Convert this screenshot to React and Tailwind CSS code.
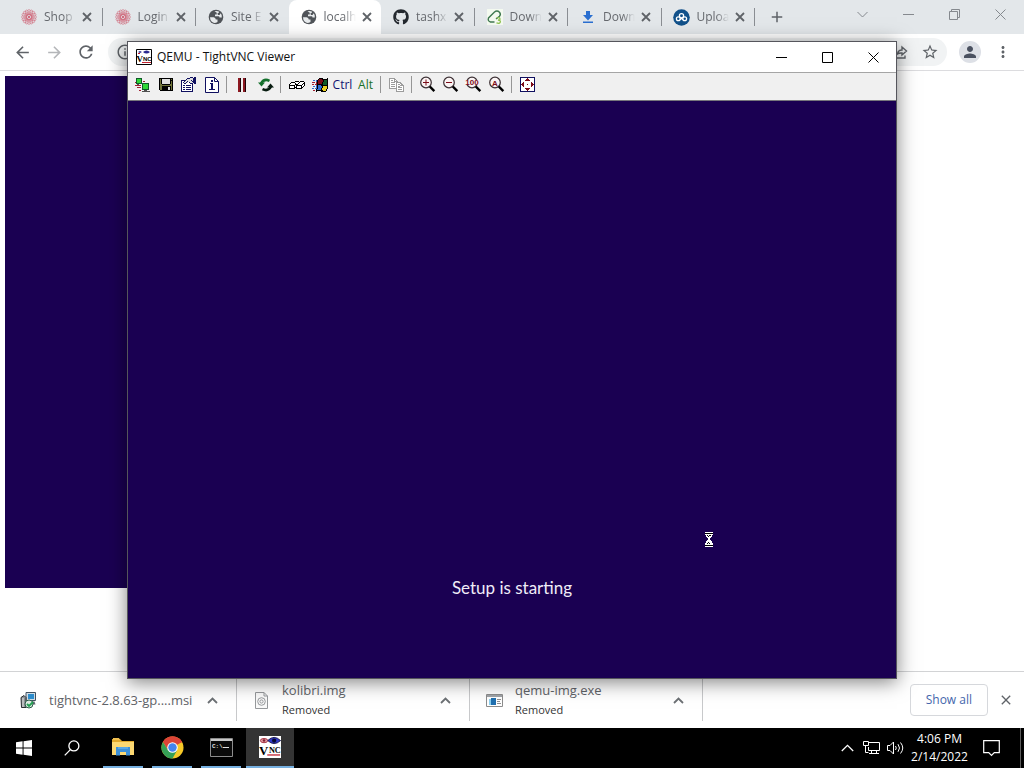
import React from "react";
import {
  MdAdd, MdArrowBack, MdArrowForward, MdClose, MdInfoOutline, MdMoreVert,
  MdPerson, MdRefresh, MdStarBorder,
} from "react-icons/md";
import { FaGithub } from "react-icons/fa";

const palette = {
  K: "#000000", W: "#ffffff", N: "#101060", O: "#70743a", R: "#7c0c18", S: "#9c9c9c",
  L: "#30d838", G: "#0f5a28", D: "#505050", B: "#2f6fd0", Y: "#e8d020", E: "#e0e0e0", C: "#a02030",
};

/* Draws a bitmap icon, one square for each letter of the palette. */
function Bitmap({ rows }) {
  const w = rows[0].length;
  return (
    <svg width={w} height={rows.length} viewBox={`0 0 ${w} ${rows.length}`} shapeRendering="crispEdges" aria-hidden="true">
      {rows.flatMap((row, y) =>
        [...row].map((c, x) =>
          palette[c] ? <rect key={`${x}-${y}`} x={x} y={y} width="1" height="1" fill={palette[c]} /> : null
        )
      )}
    </svg>
  );
}

const newConnection = [
  ".GGGGGG........", ".GLLLLG........", ".GLLLLG........", ".GLLLLG.CC.....",
  "CGLLLLG........", ".GGGGGGGGGGGGG.", "..DD...GLLLLLG.", "CCCCCC.GLLLLLG.",
  ".......GLLLLLG.", "..CCCC.GLLLLLG.", ".......GLLLLLG.", ".......GGGGGGG.",
  "....CC...DDD...", ".......DDDDDDDD",
];
const floppy = [
  "KKKKKKKKKKKKKK", "KOKEEEEEEEEKOK", "KOKEEEEEEEEKKK", "KOKEEEEEEEEKOK", "KOKEEEEEEEEKOK",
  "KOKEEEEEEEEKOK", "KOOKKKKKKKKOOK", "KOOOOOOOOOOOOK", "KOOKKKKKKKKKOK", "KOOKKKKKKEEKOK",
  "KOOKKKKKKEEKOK", "KOOKKKKKKEEKOK", ".KKKKKKKKKKKKK",
];
const options = [
  ".........NNN.NN", "......NNNEEENNN", ".....NEEEEEENNN", "NNNNNEEEEENENNN", "NWWNEENEEEENNNN",
  "NWNEENEWNEEENNN", "NWWNNWWWWNNN.NN", "NWWWWWWWWWWN...", "NWNNWNNNNNWN...", "NWWWWWWWWWWN...",
  "NWNNWNNNNNWN...", "NWWWWWWWWWWN...", "NWNNWNNNNNWN...", "NWWWWWWWWWWN...", "NNNNNNNNNNNN...",
];
const keys = [
  "......KKKK.KKKK.", "..KKKKWWWWKWWWWK", ".KWWWWKWWKWWWWKK", "KWWWWWKKKWWWWKWK", "KKKKKKWKKKKKKWWK",
  "KWWWWKWKWWWWKWK.", "KWWWWKKKWWWWKK..", "KKKKKK.KKKKKK...",
];
const winFlag = [
  ".......KKKK....K", "......KRRRKKKKKK", ".BB.BKRRRRRKGGGK", "....BKRRRRRKGGGK", "CCC.CKRRRRKGGGGK",
  "....CKRRRRKGGGGK", "CC.CCKKKKKKGGGGK", "....BKBBBKKKKKKK", ".BB.BKBBBBKYYYYK", "....BKBBBBKYYYYK",
  "BB.BBKBBBKYYYYYK", "....KBBBBKYYYYK.", ".CC.KKKKKKKYYYK.", "....K....KKKKK..",
];
const copy = [
  "SSSSSS..........", "SWWWWSS.........", "SWSSWSWS........", "SWWWWSSSS.......", "SWSSSSWSSSSS....",
  "SWWWWWWSWWWSS...", "SWSSSSWSWSSWSS..", "SWWWWWWSWWWSSSS.", "SWSSSSWSWSSWWWS.", "SWWWWWWSWSSSSWS.",
  "SSSSSSSSWWWWWWS.", ".......SWSSSSWS.", ".......SWWWWWWS.", ".......SSSSSSSS.",
];
const fullScreen = [
  "NNNNNNNNNNNNNNN", "NWWWWWWRWWWWWWN", "NWWWWWRRRWWWWWN", "NWWWWRRRRRWWWWN", "NWWWWWWWWWWWWWN",
  "NWWRWWWWWWWRWWN", "NWRRWWWWWWWRRWN", "NRRRWWWRWWWRRRN", "NWRRWWWWWWWRRWN", "NWWRWWWWWWWRWWN",
  "NWWWWWWWWWWWWWN", "NWWWWRRRRRWWWWN", "NWWWWWRRRWWWWWN", "NWWWWWWRWWWWWWN", "NNNNNNNNNNNNNNN",
];
const hourglass = [
  "WWWWWWWW", "KKKKKKKK", "WWWWWWWW", ".WKWKKW.", ".WWKWWW.", "..WWWW..", "...WW...", "...WW...",
  "..WWWW..", ".WWWWWW.", ".WWKWWW.", "WWKWKWWW", "WWWWWWWW", "KKKKKKKK", "WWWWWWWW",
];

function RefreshArrows() {
  return (
    <svg width="16" height="14" viewBox="0 0 16 14" aria-hidden="true">
      <path d="M3 5.500Q6 0 11.500 2.800" fill="none" stroke="#14702c" strokeWidth="2.600" />
      <path d="M0 4.500h7L3.500 8.500z" fill="#14702c" />
      <path d="M13 8.500Q10 14 4.500 11.200" fill="none" stroke="#081c10" strokeWidth="2.600" />
      <path d="M16 9.500H9l3.500-4z" fill="#081c10" />
    </svg>
  );
}

function InfoPage() {
  return (
    <svg width="14" height="16" viewBox="0 0 14 16" aria-hidden="true">
      <path d="M.5.5h9l4 4v11H.5z" fill="#fff" stroke="#101060" />
      <path d="M9.500.5v4h4" fill="none" stroke="#101060" />
      <path d="M6 3h2v2H6zM5 6h3v6h2v1H4v-1h2V7H5z" fill="#101060" />
    </svg>
  );
}

function Pause() {
  return (
    <svg width="9" height="14" viewBox="0 0 9 14" shapeRendering="crispEdges" aria-hidden="true">
      <path d="M0 0h3v14H0zM5 0h3v14H5z" fill="#8c1820" />
      <path d="M2 0h1v14H2zM7 0h1v14H7z" fill="#200408" />
    </svg>
  );
}

function Magnifier({ kind }) {
  return (
    <svg width="17" height="17" viewBox="0 0 17 17" aria-hidden="true">
      <circle cx="7" cy="6.500" r="5.300" fill="#fbf4f4" stroke="#3c3034" strokeWidth="1.200" />
      <path d="M10.800 10.500l4.500 4.700" stroke="#000" strokeWidth="2.400" />
      {kind === "in" && <path d="M4 6h6v1H4zM6.500 3.500h1v6h-1z" fill="#7c0c18" />}
      {kind === "out" && <path d="M4 6h6v1H4z" fill="#7c0c18" />}
      {kind === "full" && (
        <>
          <path d="M0 4h14v5H0z" fill="#fbf4f4" />
          <text x="7" y="9" textAnchor="middle" fontFamily="Liberation Sans" fontWeight="700" fontSize="8" fill="#7c0c18">100</text>
        </>
      )}
      {kind === "auto" && (
        <text x="7" y="9.500" textAnchor="middle" fontFamily="Liberation Sans" fontWeight="700" fontSize="8" fill="#7c0c18">A</text>
      )}
    </svg>
  );
}

function VncLogo({ size }) {
  return (
    <svg width={size} height={size} viewBox="0 0 24 24" aria-hidden="true">
      <path d="M0 0h24v24H0z" fill="#fff" />
      <ellipse cx="5.500" cy="5" rx="4" ry="2.300" fill="#e8a0a8" stroke="#a02838" strokeWidth="1" />
      <circle cx="5.500" cy="5" r="1.400" fill="#802030" />
      <path d="M9.500 5q7-7 14 0q-7 6.500-14 0z" fill="#3038c8" stroke="#101048" />
      <circle cx="16.500" cy="5" r="2.300" fill="#080830" />
      <text x="0" y="20.500" fontFamily="Liberation Serif" fontWeight="700" fontSize="14" fill="#000">V</text>
      <text x="10.800" y="18.500" fontFamily="Liberation Serif" fontWeight="700" fontSize="9" fill="#000">NC</text>
      <path d="M9 20h14v1.400H9z" fill="#c02030" />
    </svg>
  );
}

function VncSmall() {
  return (
    <svg width="16" height="16" viewBox="0 0 16 16" aria-hidden="true">
      <path d="M.5.5h15v15H.5z" fill="#fff" stroke="#000" />
      <path d="M2 3l2-1 2 1-2 1zM7 3q3.500-3 7 0q-3.500 3-7 0z" fill="#282890" />
      <path d="M2 4h2v1H2z" fill="#c02030" />
      <text x=".500" y="13" fontFamily="Liberation Serif" fontWeight="700" fontSize="9" fill="#000">V</text>
      <text x="7" y="12" fontFamily="Liberation Sans" fontWeight="700" fontSize="6" fill="#000">NC</text>
      <path d="M6 13h9v1H6z" fill="#c02030" />
    </svg>
  );
}

function Rosette() {
  return (
    <svg width="16" height="16" viewBox="0 0 16 16" aria-hidden="true">
      <g fill="none" stroke="#cf6a7c" strokeWidth=".55">
        {[0, 22.5, 45, 67.5, 90, 112.5, 135, 157.5].map((a) => (
          <ellipse key={a} cx="8" cy="8" rx="7.600" ry="2.400" transform={`rotate(${a} 8 8)`} />
        ))}
      </g>
      <circle cx="8" cy="8" r="1.200" fill="#cf6a7c" />
    </svg>
  );
}

function Clip() {
  return (
    <svg width="16" height="16" viewBox="0 0 16 16" aria-hidden="true">
      <path d="M0 0h16v16H0z" fill="#f4faf0" />
      <path d="M7.500 13H3.500Q.4 12 1.500 9L7.500 3Q10 1 12.500 3.200q1.700 2 0 4L9 10" fill="none" stroke="#3f7850" strokeWidth="1.400" />
      <path d="M9.500 9q3.500-1 3.500.9t-2 1.100q2.800.2 2.300 2.100t-3.800.8" fill="none" stroke="#8cc050" strokeWidth="1.300" />
    </svg>
  );
}

function BlueDownload() {
  return (
    <svg width="16" height="16" viewBox="0 0 16 16" aria-hidden="true">
      <path d="M6 2h4v4h3l-5 5.500L3 6h3zM3 12.500h10V14H3z" fill="#2a6fd0" />
    </svg>
  );
}

function CloudBadge() {
  return (
    <svg width="17" height="17" viewBox="0 0 17 17" aria-hidden="true">
      <circle cx="8.500" cy="8.500" r="8.300" fill="#11518a" />
      <g fill="none" stroke="#fff" strokeWidth="1.300">
        <circle cx="5.300" cy="9.800" r="1.900" />
        <circle cx="11.700" cy="9.800" r="1.900" />
        <circle cx="8.500" cy="6.800" r="2.100" />
        <path d="M7 10.800l1.500-1.500 1.500 1.500" />
      </g>
    </svg>
  );
}

function Globe() {
  return (
    <svg width="16" height="16" viewBox="0 0 16 16" aria-hidden="true">
      <circle cx="8" cy="8" r="7.300" fill="#505459" />
      <path d="M2 8.200h3.600q2 .2 2.200 2.200h1.700V13Q6 15 3.600 12.500 2 10.800 2 8.200z" fill="#e8ebed" />
      <path d="M6.500 2.300q2.700-.8 4.700.5L10.500 4H8.700v1.600H7v1.700h3.500q1 0 1 1.200h2.300q.3-2.500-1-4.300L11.500 6H9.800V4.500" fill="#e8ebed" />
    </svg>
  );
}

const tabs = [
  { title: "Shop", icon: <Rosette /> },
  { title: "Login", icon: <Rosette /> },
  { title: "Site E", icon: <Globe /> },
  { title: "localh", icon: <Globe />, active: true },
  { title: "tashx", icon: <FaGithub className="size-4 text-[#24292f]" /> },
  { title: "Down", icon: <Clip /> },
  { title: "Down", icon: <BlueDownload /> },
  { title: "Uploa", icon: <CloudBadge /> },
];

function Tab({ title, icon, active, divided }) {
  return (
    <div
      className={
        "flex min-w-0 flex-1 items-center pl-[11px] " +
        (active ? "rounded-t-lg bg-white" : divided ? "my-2 border-r border-[#8a8e93]" : "my-2")
      }
    >
      <button role="tab" aria-selected={!!active} className="flex min-w-0 items-center gap-1.5">
        <span className="flex w-[18px] shrink-0 justify-center">{icon}</span>
        <span className="w-8 overflow-hidden text-left text-xs leading-[18px] whitespace-nowrap text-[#66696e] [mask-image:linear-gradient(to_right,black_60%,transparent)]">
          {title}
        </span>
      </button>
      <button aria-label={`Close ${title}`} className="ml-1 shrink-0 text-[#5f6368]">
        <svg width="14" height="14" viewBox="0 0 14 14" fill="none" stroke="currentColor" strokeWidth="1.800" aria-hidden="true">
          <path d="M3 3l8 8M11 3l-8 8" />
        </svg>
      </button>
    </div>
  );
}

function WindowGlyph({ d }) {
  return (
    <svg width="11" height="11" viewBox="0 0 11 11" fill="none" stroke="currentColor" aria-hidden="true">
      <path d={d} />
    </svg>
  );
}

function TabStrip() {
  const controls = [
    ["Search tabs", "M.5 3l5 5 5-5"],
    ["Minimize", "M0 5.500h11"],
    ["Restore", "M.5 2.500h8v8h-8zM2.500 2.500v-2h8v8h-2"],
    ["Close", "M.5.5l10 10M10.500.5l-10 10"],
  ];
  return (
    <div className="flex h-[34px] shrink-0 bg-[#e3e7ea] pl-[9px]">
      <div role="tablist" className="flex w-[746px] shrink">
        {tabs.map((t, i) => (
          <Tab key={i} {...t} divided={i !== 2} />
        ))}
      </div>
      <button aria-label="New tab" className="ml-[13px] text-[#5f6368]">
        <MdAdd className="size-[18px]" />
      </button>
      <div className="ml-auto flex h-7 pr-px text-[#85898e]">
        {controls.map(([label, d]) => (
          <button key={label} aria-label={label} className="flex w-[46px] items-center justify-center">
            <WindowGlyph d={d} />
          </button>
        ))}
      </div>
    </div>
  );
}

function AddressBar() {
  return (
    <div className="flex h-[37px] shrink-0 items-center border-b border-[#dcdcdf] bg-white pl-1.5 text-[#5f6368]">
      <button aria-label="Back" className="flex w-8 justify-center"><MdArrowBack className="size-[19px]" /></button>
      <button aria-label="Forward" className="flex w-8 justify-center text-[#b4b6b9]"><MdArrowForward className="size-[19px]" /></button>
      <button aria-label="Reload" className="flex w-8 justify-center"><MdRefresh className="size-5" /></button>
      <div className="ml-1.5 flex h-7 flex-1 items-center rounded-full bg-[#f1f3f4] px-2">
        <MdInfoOutline className="size-[18px]" />
        <input aria-label="Address" className="min-w-0 flex-1 bg-transparent px-2 text-sm outline-none" />
        <button aria-label="Share" className="mr-1 flex w-8 justify-center">
          <svg width="16" height="16" viewBox="0 0 16 16" fill="none" stroke="currentColor" strokeWidth="1.400" aria-hidden="true">
            <path d="M2 6v8h10v-2.500M4.500 10q.5-4 4.500-4V3l4.500 4L9 11V9q-3-.2-4.500 1z" />
          </svg>
        </button>
        <button aria-label="Bookmark" className="flex w-[18px] justify-center"><MdStarBorder className="size-[18px]" /></button>
      </div>
      <button aria-label="Profile" className="ml-3 flex size-[22px] items-center justify-center rounded-full bg-[#dde0e6] text-[#4a5160]">
        <MdPerson className="size-[18px]" />
      </button>
      <button aria-label="Menu" className="flex w-[43px] justify-center"><MdMoreVert className="size-[18px]" /></button>
    </div>
  );
}

const toolGroups = [
  [["New connection", <Bitmap rows={newConnection} />], ["Save session", <Bitmap rows={floppy} />], ["Options", <Bitmap rows={options} />], ["Connection info", <InfoPage />]],
  [["Pause", <Pause />], ["Refresh", <RefreshArrows />]],
  [["Send Ctrl-Alt-Del", <Bitmap rows={keys} />], ["Send Win key", <Bitmap rows={winFlag} />], ["Ctrl", <span className="text-[#101070]">Ctrl</span>], ["Alt", <span className="text-[#187028]">Alt</span>]],
  [["Transfer files", <Bitmap rows={copy} />]],
  [["Zoom in", <Magnifier kind="in" />], ["Zoom out", <Magnifier kind="out" />], ["Zoom 100", <Magnifier kind="full" />], ["Zoom auto", <Magnifier kind="auto" />]],
  [["Full screen", <Bitmap rows={fullScreen} />]],
];

function ViewerWindow() {
  const controls = [
    ["Minimize", "M0 5.500h11"],
    ["Maximize", "M.5.5h10v10H.5z"],
    ["Close", "M.5.5l10 10M10.500.5l-10 10"],
  ];
  return (
    <section
      aria-label="QEMU - TightVNC Viewer"
      className="absolute top-[41px] left-[127px] flex h-[638px] w-[770px] flex-col border border-[#55555c] bg-[#1a0052] shadow-[0_3px_18px_rgba(0,0,0,0.5)]"
    >
      <header className="flex h-[30px] shrink-0 items-center bg-white pl-2">
        <VncSmall />
        <h1 className="ml-[5px] text-xs text-[#111]">QEMU - TightVNC Viewer</h1>
        <div className="ml-auto flex h-full text-black">
          {controls.map(([label, d]) => (
            <button key={label} aria-label={label} className="flex w-[46px] items-center justify-center">
              <WindowGlyph d={d} />
            </button>
          ))}
        </div>
      </header>
      <div role="toolbar" className="flex h-[29px] shrink-0 items-center border-t border-[#a5a5a5] border-b border-b-[#77777c] bg-[#f0f0f0] pb-1 pl-[3px] text-xs">
        {toolGroups.map((group, g) => (
          <React.Fragment key={g}>
            {g > 0 && <span className="ml-[3px] h-[17px] w-[5px] border-l border-[#969696]" />}
            {group.map(([label, icon]) => (
              <button key={label} aria-label={label} className="flex w-[23px] items-center justify-center">{icon}</button>
            ))}
          </React.Fragment>
        ))}
      </div>
      <div className="relative flex flex-1 flex-col items-center justify-end pb-[76px]">
        <p className="font-['Lato','Open_Sans',sans-serif] text-[17px] leading-7 text-[#f0ecf8]">Setup is starting</p>
        <span className="absolute top-[431px] left-[577px]"><Bitmap rows={hourglass} /></span>
      </div>
    </section>
  );
}

function InstallerIcon() {
  return (
    <svg width="17" height="17" viewBox="0 0 17 17" aria-hidden="true">
      <path d="M6 .5h9.500v8H6z" fill="#d0dce4" stroke="#405060" />
      <path d="M8 2h6v5H8z" fill="#2c8ccc" />
      <path d="M1 5.500l3-2 2 2v10H1.500z" fill="#8c9094" stroke="#282c30" />
      <path d="M3 6v9" stroke="#e8e8e8" />
      <path d="M6 9.500h8.500l1 3H6z" fill="#606870" />
      <circle cx="9" cy="12" r="4" fill="#dce8e0" stroke="#2c5c48" />
      <path d="M7 12l2 2 4-4" fill="none" stroke="#20a050" strokeWidth="1.800" />
    </svg>
  );
}

function DiscFileIcon() {
  return (
    <svg width="13" height="17" viewBox="0 0 13 17" fill="none" stroke="#96999c" aria-hidden="true">
      <path d="M.5.5h8.500l3.500 3.500v12.500H.5z" fill="#fafafa" />
      <path d="M9 .5V4h3.500" />
      <circle cx="6.500" cy="9.500" r="3.800" />
      <circle cx="6.500" cy="9.500" r="1.600" />
    </svg>
  );
}

function ExeIcon() {
  return (
    <svg width="17" height="13" viewBox="0 0 17 13" aria-hidden="true">
      <path d="M.5.5h16v12H.5z" fill="#fff" stroke="#8c8c8c" />
      <path d="M1 1h15v2H1z" fill="#a0a4a8" />
      <path d="M3 5h2v6H3z" fill="#8cd0f0" />
      <path d="M5 4h5v7H5z" fill="#2070b0" />
      <path d="M11 5.500h4M11 7.500h3M11 9.500h4" stroke="#909090" />
    </svg>
  );
}

const downloads = [
  { name: "tightvnc-2.8.63-gp....msi", icon: <InstallerIcon /> },
  { name: "kolibri.img", icon: <DiscFileIcon />, status: "Removed" },
  { name: "qemu-img.exe", icon: <ExeIcon />, status: "Removed" },
];

function DownloadShelf() {
  return (
    <footer className="flex h-[57px] shrink-0 items-center border-t border-[#d2d3d5] bg-white pl-1 text-[#5f6368]">
      {downloads.map((d) => (
        <div key={d.name} className="flex h-[42px] w-[233px] items-center border-r border-[#c8c9cb] pl-4">
          <span className="flex w-[17px] shrink-0 justify-center">{d.icon}</span>
          <div className="ml-3 flex-1 whitespace-nowrap">
            <p className="text-[13px] leading-5">{d.name}</p>
            {d.status && <p className="text-[11px] leading-5 text-[#333]">{d.status}</p>}
          </div>
          <button aria-label={`Options for ${d.name}`} className="mr-[18px]">
            <svg width="11" height="7" viewBox="0 0 11 7" fill="none" stroke="#6c7074" strokeWidth="1.800" aria-hidden="true">
              <path d="M1 6l4.500-4.500L10 6" />
            </svg>
          </button>
        </div>
      ))}
      <button className="ml-auto h-8 rounded border border-[#d6d8dc] px-[15px] text-xs text-[#4466ac]">Show all</button>
      <button aria-label="Close downloads" className="mr-[10px] ml-[10px]"><MdClose className="size-4" /></button>
    </footer>
  );
}

function Folder() {
  return (
    <svg width="22" height="20" viewBox="0 0 22 20" aria-hidden="true">
      <path d="M0 2h8l2 2h12v14H0z" fill="#e0a82c" />
      <path d="M1 1h6l1 2H1z" fill="#f0c050" />
      <path d="M0 5h22v13H0z" fill="#fcd872" />
      <path d="M4 10h14v8.500h-4V15H8v3.500H4z" fill="#3c90d8" />
      <path d="M6 10h10v2H6z" fill="#58a8e8" />
    </svg>
  );
}

function ChromeLogo() {
  return (
    <svg width="23" height="23" viewBox="0 0 24 24" aria-hidden="true">
      <circle cx="12" cy="12" r="11.500" fill="#f7c928" />
      <path d="M12 12L2.040 6.250A11.500 11.500 0 0 1 21.960 6.250z" fill="#dc4437" />
      <path d="M12 6.500h10.100L21.960 6.250A11.500 11.500 0 0 0 2.040 6.250L7.200 14.700 12 12z" fill="#dc4437" />
      <path d="M2.040 6.250A11.500 11.500 0 0 0 12 23.500l4.800-8.700L12 12l-4.800 2.700z" fill="#35a056" />
      <circle cx="12" cy="12" r="5.500" fill="#fff" />
      <circle cx="12" cy="12" r="4.400" fill="#4585ee" />
    </svg>
  );
}

function Terminal() {
  return (
    <svg width="23" height="19" viewBox="0 0 23 19" aria-hidden="true">
      <path d="M.5.5h22v18H.5z" fill="#0a0a0a" stroke="#8c8c8c" />
      <path d="M1 1h21v2H1z" fill="#c8c8c8" />
      <text x="2" y="10" fontFamily="Liberation Mono" fontWeight="700" fontSize="6" fill="#e0e0e0">C:\</text>
      <path d="M13 9h6v1h-6z" fill="#e0e0e0" />
    </svg>
  );
}

const apps = [
  ["File Explorer", <Folder />],
  ["Google Chrome", <ChromeLogo />],
  ["Command Prompt", <Terminal />],
];

function Taskbar() {
  return (
    <nav aria-label="Taskbar" className="flex h-10 shrink-0 bg-black text-xs text-white">
      <button aria-label="Start" className="flex w-12 items-center justify-center">
        <svg width="16" height="16" viewBox="0 0 17 17" fill="#fff" aria-hidden="true">
          <path d="M0 2.400l7-1V8H0zM8 1.200L17 0v8H8zM0 9h7v6.600l-7-1zM8 9h9v8l-9-1.200z" />
        </svg>
      </button>
      <button aria-label="Search" className="mr-[3px] flex w-12 items-center justify-center">
        <svg width="16" height="16" viewBox="0 0 17 17" fill="none" stroke="#fff" strokeWidth="1.400" aria-hidden="true">
          <circle cx="10.500" cy="6.300" r="5.300" />
          <path d="M6.800 10.200L.8 16.300" />
        </svg>
      </button>
      {apps.map(([label, icon]) => (
        <button key={label} aria-label={label} className="mr-[1px] flex w-12 flex-col items-center">
          <span className="flex flex-1 items-center">{icon}</span>
          <span className="h-0.5 w-10 bg-[#76b0e0]" />
        </button>
      ))}
      <button aria-label="TightVNC Viewer" className="flex w-12 flex-col items-center bg-[#343434]">
        <span className="flex flex-1 items-center"><VncLogo size={22} /></span>
        <span className="h-0.5 w-full bg-[#76b0e0]" />
      </button>
      <div className="ml-auto flex items-center">
        <button aria-label="Hidden icons" className="flex w-6 justify-center">
          <svg width="13" height="8" viewBox="0 0 13 8" fill="none" stroke="#fff" strokeWidth="1.300" aria-hidden="true">
            <path d="M.8 7l5.700-5.700L12.200 7" />
          </svg>
        </button>
        <button aria-label="Network" className="flex w-6 justify-center">
          <svg width="17" height="14" viewBox="0 0 17 14" fill="none" stroke="#fff" aria-hidden="true">
            <path d="M6 1.500h10.500v8H5.500V6M8.500 9.500v3M13.500 9.500v3M6 12.500h10M.5.500h5v4h-5zM2.500 4.500v7h3" />
          </svg>
        </button>
        <button aria-label="Volume" className="flex w-6 justify-center">
          <svg width="17" height="14" viewBox="0 0 17 14" fill="none" stroke="#fff" aria-hidden="true">
            <path d="M.5 4.500h2.500l3.500-3.500v12L3 9.500H.5zM8.500 5q1.500 2 0 4M11 3.200q3 3.800 0 7.600M13.500 1.500q4.500 5.500 0 11" />
          </svg>
        </button>
        <div className="w-[65px] text-center leading-[18px]">
          <p>4:06 PM</p>
          <p>2/14/2022</p>
        </div>
        <button aria-label="Notifications" className="flex w-[38px] justify-center">
          <svg width="17" height="17" viewBox="0 0 17 17" fill="none" stroke="#fff" strokeWidth="1.200" aria-hidden="true">
            <path d="M.7.7h15.600v12h-5L8.500 15.500 5.700 12.700h-5z" />
          </svg>
        </button>
        <span className="ml-[10px] h-10 w-1 border-l border-[#5c5c5c]" />
      </div>
    </nav>
  );
}

export default function App() {
  return (
    <div className="relative flex min-h-screen flex-col overflow-hidden bg-white font-['Open_Sans',sans-serif]">
      <TabStrip />
      <AddressBar />
      <main className="flex-1 bg-white p-[5px]">
        <div className="h-[512px] w-[640px] bg-[#1a0052]" />
      </main>
      <DownloadShelf />
      <Taskbar />
      <ViewerWindow />
    </div>
  );
}
